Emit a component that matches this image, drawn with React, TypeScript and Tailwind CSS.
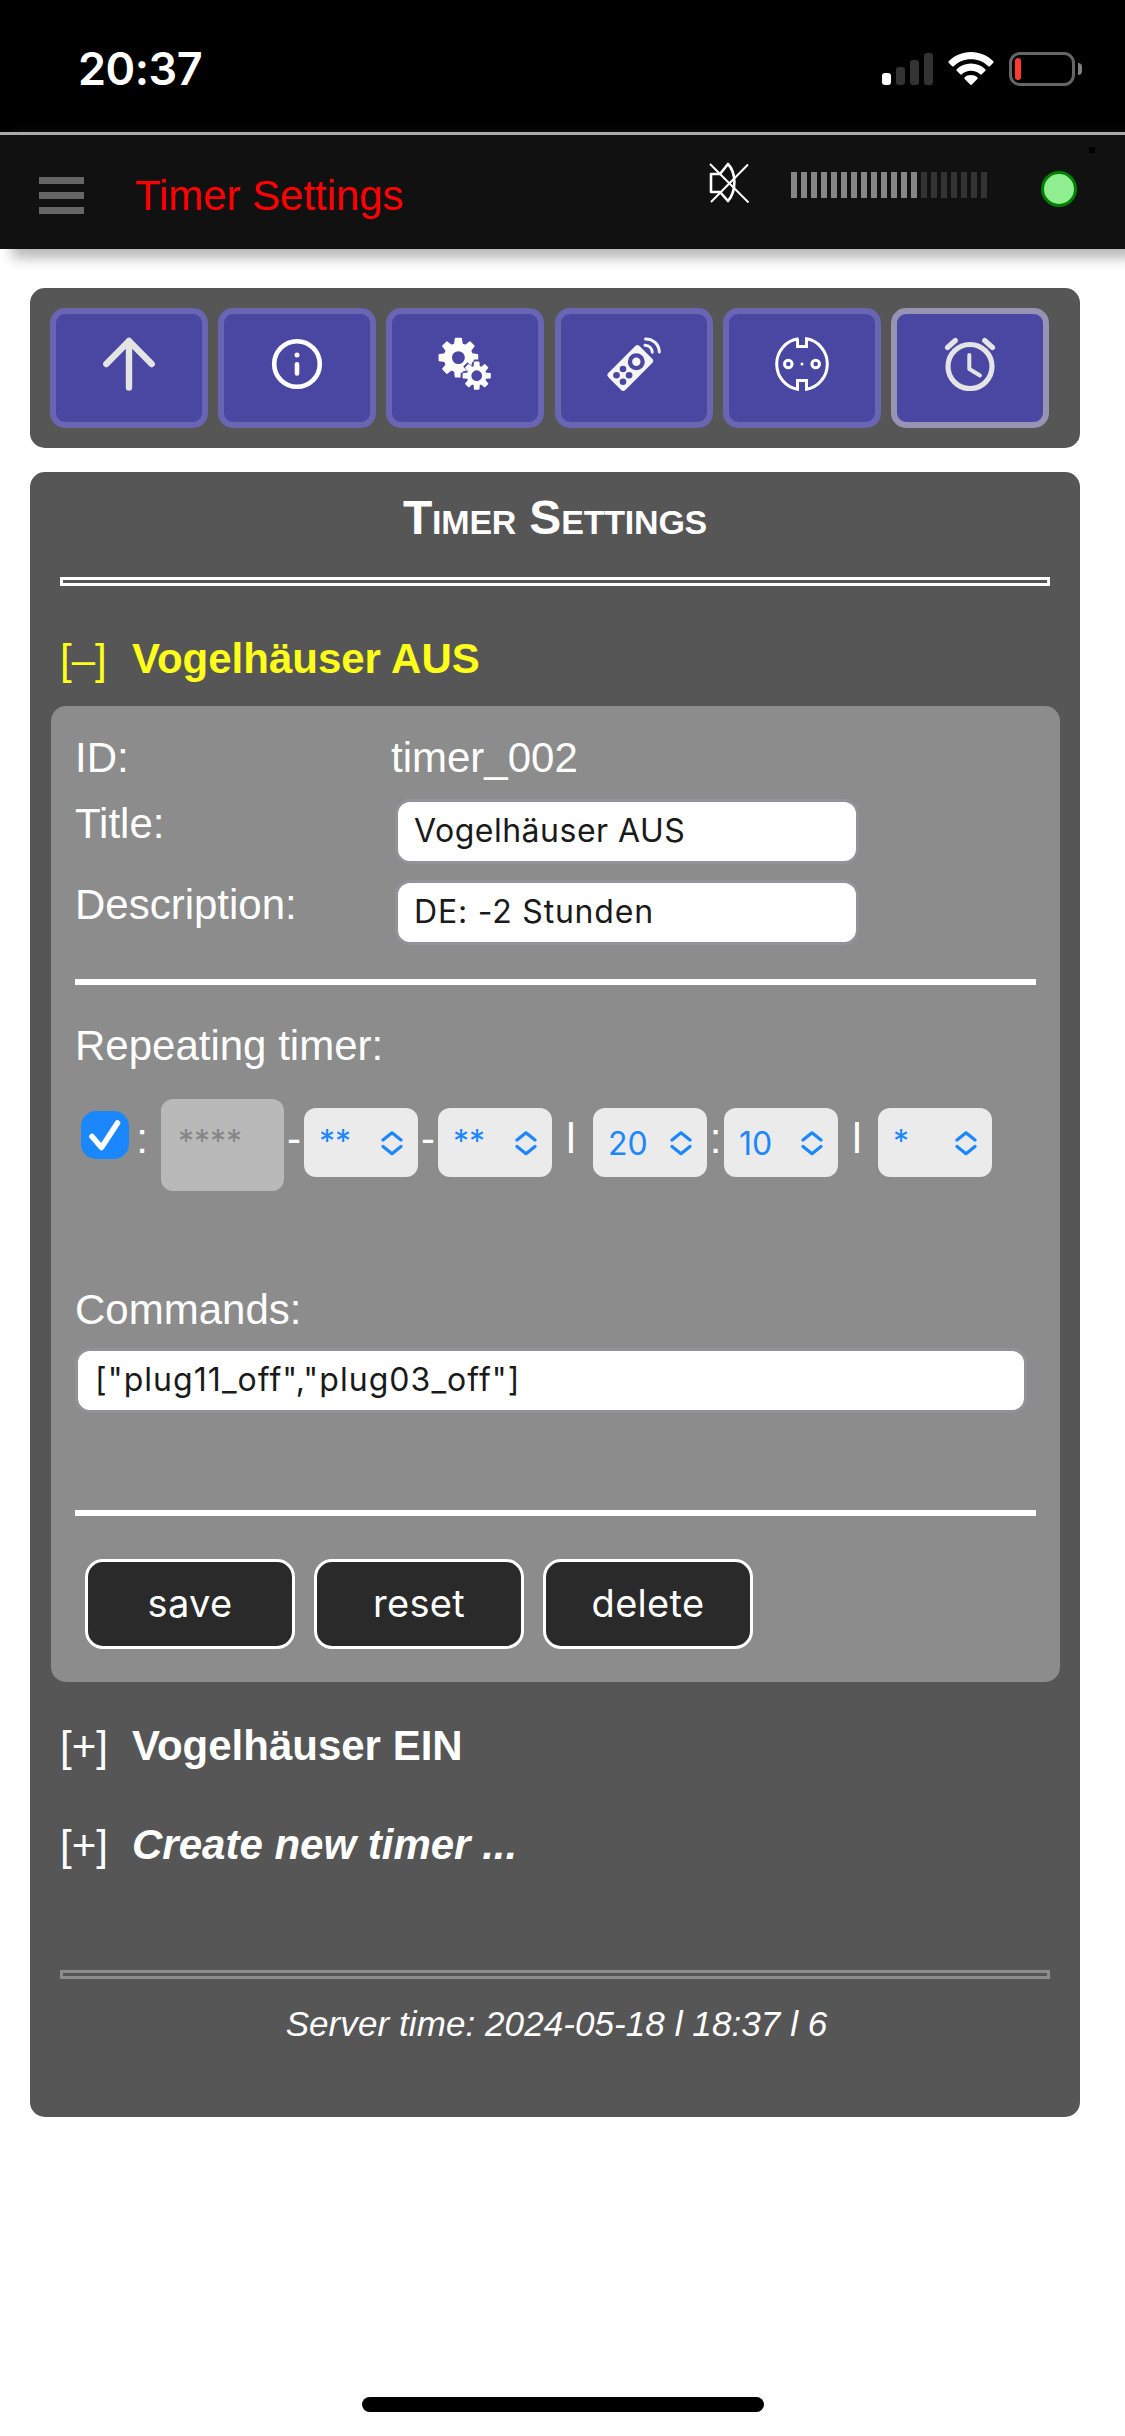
import type { ReactNode } from "react";

const SANS = "font-['Liberation_Sans',Arial,sans-serif]";
const UI = "font-['Inter',sans-serif]";

function StatusBar() {
  return (
    <div className="flex h-[132px] items-start justify-between bg-black pl-[78px] pr-[43px]">
      <span className={`${UI} mt-[42px] text-[45px] font-semibold leading-[54px] tracking-[-0.5px] text-white`}>20:37</span>
      <div className="mt-[52px] flex h-[34px] items-end">
        <div className="mb-px flex items-end gap-[5px]">
          <div className="h-[12px] w-[9px] rounded-[3px] bg-white" />
          <div className="h-[18px] w-[9px] rounded-[3px] bg-[#333]" />
          <div className="h-[25px] w-[9px] rounded-[3px] bg-[#333]" />
          <div className="h-[32px] w-[9px] rounded-[3px] bg-[#333]" />
        </div>
        <svg className="ml-[15px] mb-px h-[33px] w-[46px]" viewBox="0 0 46 33" fill="#fff">
          <path d="M23 0C31.800 0 39.500 3.500 45.300 9.200c.5.5.5 1.100 0 1.600l-3.400 3.400c-.5.5-1.100.5-1.600 0C35.800 9.800 29.700 7.200 23 7.200S10.200 9.800 5.700 14.200c-.5.5-1.100.5-1.600 0L.7 10.800c-.5-.5-.5-1.100 0-1.600C6.500 3.500 14.200 0 23 0Z" />
          <path d="M23 11.500c5.600 0 10.600 2.200 14.300 5.700.5.5.5 1.100 0 1.600l-3.500 3.500c-.5.5-1.100.5-1.600 0-2.400-2.200-5.600-3.600-9.200-3.600s-6.800 1.400-9.200 3.600c-.5.5-1.100.5-1.600 0l-3.500-3.500c-.5-.5-.5-1.100 0-1.600 3.700-3.500 8.700-5.700 14.300-5.700Z" />
          <path d="M23 23c2.400 0 4.600.9 6.300 2.300.5.5.5 1.100 0 1.600l-5.400 5.600c-.5.6-1.300.6-1.800 0l-5.400-5.600c-.5-.5-.5-1.100 0-1.600C18.400 23.900 20.600 23 23 23Z" />
        </svg>
        <div className="ml-[15px] flex h-[34px] w-[66px] items-center rounded-[11px] border-[3px] border-[#666] pl-[3px]">
          <div className="h-[22px] w-[6px] rounded-[3px] bg-[#ff3a30]" />
        </div>
        <div className="mb-[11px] ml-[3px] h-[12px] w-[4px] rounded-r-full bg-[#808080]" />
      </div>
    </div>
  );
}

function Header() {
  return (
    <header className="relative flex h-[117px] items-start border-t-[3px] border-[#aaa] bg-[#111] shadow-[12px_9px_12px_0_#b8b8b8]">
      <div className="ml-[39px] mt-[42px] flex flex-col gap-[8px]">
        <div className="h-[7px] w-[45px] bg-[#666]" />
        <div className="h-[7px] w-[45px] bg-[#666]" />
        <div className="h-[7px] w-[45px] bg-[#666]" />
      </div>
      <h1 className="ml-[51px] mt-[37px] w-[300px] text-[42px] leading-[48px] tracking-[-0.05px] text-[#f00]">Timer Settings</h1>
      <svg className="ml-[272px] mt-[26px] h-[42px] w-[44px]" viewBox="0 0 44 42" fill="none" stroke="#fff">
        <path strokeWidth="2.600" strokeLinejoin="round" d="M4 13H13L21 3C29.500 12 29.500 30 21 40L13 31H4Z" />
        <path strokeWidth="2" d="M3 3L41.500 41.500M41 3.500L4 41" />
      </svg>
      <div className="ml-[40px] mt-[37px] flex gap-[4px]">
        {Array.from({ length: 20 }, (_, i) => (
          <div key={i} className={i < 13 ? "h-[26px] w-[6px] bg-[#868686]" : "h-[26px] w-[6px] bg-[#333]"} />
        ))}
      </div>
      <div className="ml-[54px] mt-[36px] h-[36px] w-[36px] rounded-full border-[3px] border-[#008000] bg-[#90ee90]" />
      <div className="ml-[12px] mt-[12px] h-[6px] w-[6px] bg-black" />
    </header>
  );
}

function gearPath(cx: number, cy: number, outer: number, inner: number, hole: number) {
  const pts: string[] = [];
  for (let i = 0; i < 8; i++) {
    const a = (i * Math.PI) / 4 - Math.PI / 2;
    const at = (r: number, d: number) => `${(cx + r * Math.cos(a + d)).toFixed(2)} ${(cy + r * Math.sin(a + d)).toFixed(2)}`;
    pts.push(at(inner, -0.26), at(outer, -0.15), at(outer, 0.15), at(inner, 0.26));
  }
  return `M${pts.join("L")}ZM${cx - hole} ${cy}a${hole} ${hole} 0 1 0 ${hole * 2} 0a${hole} ${hole} 0 1 0 ${-hole * 2} 0Z`;
}

const icons: ReactNode[] = [
  <g fill="none" stroke="#e4e4e4" strokeWidth="6.400" strokeLinecap="round" strokeLinejoin="round">
    <path d="M27 50.500V4M4.300 27L27 4L49.700 27" />
  </g>,
  <g fill="none" stroke="#fff">
    <circle cx="27" cy="27" r="22.800" strokeWidth="4.600" />
    <circle cx="27" cy="18" r="2.500" fill="#fff" stroke="none" />
    <path d="M27 27.200V36.500" strokeWidth="4.600" strokeLinecap="round" />
  </g>,
  <g fill="#fff" fillRule="evenodd" stroke="#fff" strokeWidth="1.500" strokeLinejoin="round">
    <path d={gearPath(20.4, 20.6, 19.3, 14, 7.2)} />
    <path d={gearPath(38.7, 38.7, 15.5, 10.5, 7)} fill="#4947a2" stroke="#4947a2" />
    <path d={gearPath(38.7, 38.7, 13.5, 9.2, 6.1)} />
  </g>,
  <g>
    <rect x="11.300" y="9" width="24" height="44" rx="3" fill="#f4f4f4" transform="rotate(45 23.300 31)" />
    <circle cx="29.300" cy="24.700" r="8.500" fill="#4947a2" />
    <circle cx="29.300" cy="24.700" r="4.200" fill="#f4f4f4" />
    <g fill="#4947a2">
      <circle cx="9.500" cy="38.300" r="3.300" />
      <circle cx="16" cy="32" r="3.300" />
      <circle cx="22.100" cy="38.300" r="3.300" />
      <circle cx="16" cy="44.700" r="3.300" />
    </g>
    <g fill="none" stroke="#f4f4f4" strokeWidth="3" strokeLinecap="round">
      <path d="M38 8.300C42 8.500 45 11.200 45.300 15.200" />
      <path d="M38.600 1.900C46.500 2 52 7.500 52.300 15" />
    </g>
  </g>,
  <g fill="none" stroke="#fff" strokeWidth="3">
    <path d="M23.500 1.800C11 3.500 1.700 14 1.700 27S11 50.500 22.500 52.200V43.500H31.500V52.200C43 50.500 52.300 40 52.300 27S43 3.500 31.500 1.800V9.500H22.500V1.800" />
    <circle cx="13.300" cy="27" r="3.800" strokeWidth="3" />
    <circle cx="40.700" cy="27" r="3.800" strokeWidth="3" />
    <circle cx="27" cy="27" r="1.500" fill="#fff" stroke="none" />
  </g>,
  <g fill="none" stroke="#e4e4e4" strokeWidth="4" strokeLinecap="round" strokeLinejoin="round">
    <circle cx="27" cy="29.500" r="22" strokeWidth="5.200" />
    <path d="M26.300 18V32L37 38.500" />
    <path d="M4.500 10.500L12.300 3.500M49.500 10.500L41.700 3.500" strokeWidth="5.200" />
  </g>,
];

function Toolbar() {
  return (
    <nav className="mx-[30px] mt-[39px] flex h-[160px] w-[1050px] gap-[10.2px] rounded-[15px] bg-[#565656] px-[20px] py-[20px]">
      {icons.map((icon, i) => (
        <button
          key={i}
          className={`flex h-[120px] w-[158px] shrink-0 justify-center rounded-[15px] border-[6px] bg-[#4947a2] pt-[23px] ${i === 5 ? "border-[#9693b3]" : "border-[#6866b2]"}`}
        >
          <svg className="h-[54px] w-[54px]" viewBox="0 0 54 54">{icon}</svg>
        </button>
      ))}
    </nav>
  );
}

function Entry({ mark, children, className }: { mark: string; children: ReactNode; className: string }) {
  return (
    <div className={`flex h-[48px] whitespace-nowrap pl-[30px] ${className}`}>
      <span className="w-[72px] pt-px">{mark}</span>
      {children}
    </div>
  );
}

const inputStyle = `${UI} block h-[65px] rounded-[15px] border-[3px] border-[#929298] bg-white pb-[2px] text-[32px] leading-[57px] text-[#1a1a1a]`;

function Select({ children }: { children: string }) {
  return (
    <div className={`${UI} mt-[9px] flex h-[69px] w-[114px] justify-between rounded-[12px] bg-[#ebebeb] pl-[15px] pr-[15px] text-[32px] text-[#1a87ff]`}>
      <span className={children.startsWith("*") ? "leading-[67px]" : "leading-[71px]"}>{children}</span>
      <svg className="mt-[22px] h-[26px] w-[22px]" viewBox="0 0 22 26" fill="none" stroke="#1a87ff" strokeWidth="3.200" strokeLinecap="round" strokeLinejoin="round">
        <path d="M2 10L11 2.800L20 10M2 16.500L11 23.700L20 16.500" />
      </svg>
    </div>
  );
}

function Sep({ children, className }: { children: string; className: string }) {
  return <span className={`mt-[16px] text-center ${className}`}>{children}</span>;
}

function TimerForm() {
  return (
    <section className="ml-[21px] mt-[23px] w-[1009px] rounded-[15px] bg-[#8c8c8c] px-[24px] pb-[33px] pt-[28px]">
      <div className="flex h-[48px]">
        <span className="w-[316px]">ID:</span>
        <span>timer_002</span>
      </div>
      <label className="mt-[17px] flex h-[65px]">
        <span className="w-[320px] pt-px">Title:</span>
        <input className={`${inputStyle} w-[464px] pl-[16px] tracking-[0.5px]`} defaultValue="Vogelhäuser AUS" />
      </label>
      <label className="mt-[16px] flex h-[65px]">
        <span className="w-[320px] pt-px">Description:</span>
        <input className={`${inputStyle} w-[464px] pl-[16px] tracking-[0.8px]`} defaultValue="DE: -2 Stunden" />
      </label>
      <hr className="mt-[34px] h-[6px] border-0 bg-white" />
      <div className="mt-[37px] h-[48px]">Repeating timer:</div>
      <div className="mt-[29px] flex h-[92px] items-start">
        <svg className="ml-[6px] mt-[12px] h-[48px] w-[48px] rounded-[15px] bg-[#1a87ff]" viewBox="0 0 48 48" fill="none" stroke="#fff" strokeWidth="5.600" strokeLinecap="round" strokeLinejoin="round">
          <path d="M11 25.500L20.500 36.500L36.500 12" />
        </svg>
        <Sep className="w-[32px] pr-[6px]">:</Sep>
        <div className={`${UI} h-[92px] w-[123px] rounded-[12px] bg-[#b9b9b9] pl-[17px] text-[32px] leading-[85px] text-[#868686]`}>****</div>
        <Sep className="w-[20px]">-</Sep>
        <Select>**</Select>
        <Sep className="w-[20px]">-</Sep>
        <Select>**</Select>
        <Sep className="w-[41px] pr-[3px]">l</Sep>
        <Select>20</Select>
        <Sep className="w-[17px]">:</Sep>
        <Select>10</Select>
        <Sep className="w-[40px] pr-[2px]">l</Sep>
        <Select>*</Select>
      </div>
      <label className="mt-[95px] block">
        <span className="block h-[48px]">Commands:</span>
        <input className={`${inputStyle} mt-[14px] w-[952px] pl-[17px] tracking-[1.05px]`} defaultValue={'["plug11_off","plug03_off"]'} />
      </label>
      <hr className="mt-[97px] h-[6px] border-0 bg-white" />
      <div className="ml-[10px] mt-[43px] flex gap-[19px]">
        {["save", "reset", "delete"].map((label) => (
          <button key={label} className={`${UI} h-[90px] w-[210px] rounded-[18px] border-[3px] border-white bg-[#2a2a2a] pb-[2px] text-[38px] leading-[80px] tracking-[0.3px] text-white`}>
            {label}
          </button>
        ))}
      </div>
    </section>
  );
}

export default function App() {
  return (
    <div className={`${SANS} flex h-[2436px] w-[1125px] flex-col overflow-hidden bg-white`}>
      <StatusBar />
      <Header />
      <Toolbar />
      <main className="mx-[30px] mt-[24px] h-[1645px] w-[1050px] rounded-[15px] bg-[#565656] text-[42px] leading-[48px] text-white">
        <h2 className="pt-[19px] text-center text-[48px] font-bold leading-[54px] tracking-[-0.2px] [font-variant-caps:small-caps]">Timer Settings</h2>
        <hr className="mx-[30px] mt-[32px] h-[9px] border-[3px] border-white" />
        <Entry mark="[–]" className="mt-[49px] text-[#ffff1a]">
          <span className="font-bold">Vogelhäuser AUS</span>
        </Entry>
        <TimerForm />
        <Entry mark="[+]" className="mt-[40px]">
          <span className="font-bold">Vogelhäuser EIN</span>
        </Entry>
        <Entry mark="[+]" className="mt-[51px]">
          <span className="font-bold italic">Create new timer ...</span>
        </Entry>
        <hr className="mx-[30px] mt-[101px] h-[9px] border-[3px] border-[#8c8c8c]" />
        <p className="mt-[25px] pl-[3px] text-center text-[35px] italic leading-[40px] tracking-[0.08px]">Server time: 2024-05-18 l 18:37 l 6</p>
      </main>
      <div className="mx-auto mt-[280px] h-[15px] w-[402px] rounded-full bg-black" />
    </div>
  );
}
